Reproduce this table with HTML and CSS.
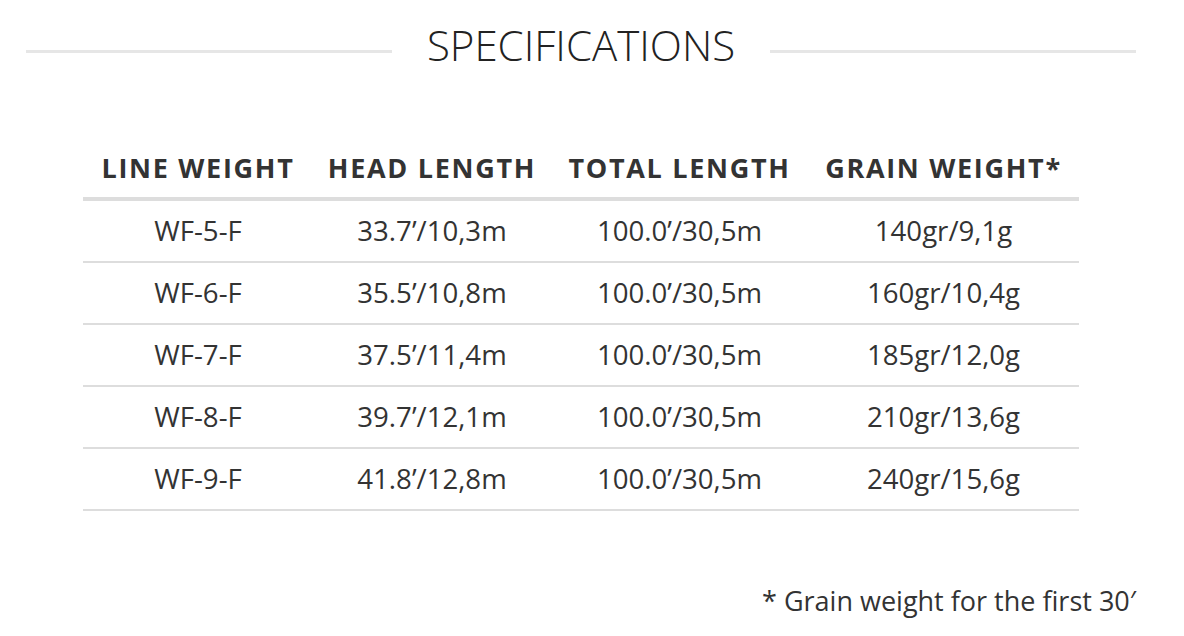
FILE: index.html
```html
<!DOCTYPE html>
<html lang="en">
<head>
<meta charset="utf-8">
<title>Specifications</title>
<link rel="stylesheet" href="styles.css">
</head>
<body>
<section class="specs">
  <div class="specs-head">
    <span class="rule"></span>
    <h2 class="specs-title">SPECIFICATIONS</h2>
    <span class="rule"></span>
  </div>
  <table class="spec-table">
    <colgroup>
      <col class="c1"><col class="c2"><col class="c3"><col class="c4">
    </colgroup>
    <thead>
      <tr><th>LINE WEIGHT</th><th>HEAD LENGTH</th><th>TOTAL LENGTH</th><th>GRAIN WEIGHT*</th></tr>
    </thead>
    <tbody>
      <tr><td>WF-5-F</td><td>33.7’/10,3m</td><td>100.0’/30,5m</td><td>140gr/9,1g</td></tr>
      <tr><td>WF-6-F</td><td>35.5’/10,8m</td><td>100.0’/30,5m</td><td>160gr/10,4g</td></tr>
      <tr><td>WF-7-F</td><td>37.5’/11,4m</td><td>100.0’/30,5m</td><td>185gr/12,0g</td></tr>
      <tr><td>WF-8-F</td><td>39.7’/12,1m</td><td>100.0’/30,5m</td><td>210gr/13,6g</td></tr>
      <tr><td>WF-9-F</td><td>41.8’/12,8m</td><td>100.0’/30,5m</td><td>240gr/15,6g</td></tr>
    </tbody>
  </table>
  <p class="footnote">* Grain weight for the first 30′</p>
</section>
</body>
</html>
```

FILE: styles.css
```css
html, body {
  margin: 0;
  padding: 0;
  background: #ffffff;
}

body {
  font-family: "Open Sans", "Liberation Sans", sans-serif;
  color: #333333;
}

.specs {
  padding: 21px 48px 0 26px;
}

.specs-head {
  display: flex;
  align-items: center;
  gap: 35px;
}

.rule {
  flex: 1;
  height: 3px;
  margin-top: 12px;
  background: #e6e6e6;
}

.specs-title {
  margin: 0;
  font-size: 42px;
  line-height: 48px;
  font-weight: 300;
  color: #222222;
  letter-spacing: 0;
}

.spec-table {
  margin: 80px 0 0 57px;
  width: 996px;
  border-collapse: collapse;
  table-layout: fixed;
}

.c1 { width: 230px; }
.c2 { width: 238px; }
.c3 { width: 257px; }
.c4 { width: 271px; }

.spec-table th {
  font-size: 27px;
  line-height: 38px;
  font-weight: 700;
  letter-spacing: 1.7px;
  color: #333333;
  padding: 0 0 10px;
  text-align: center;
  white-space: nowrap;
  border-bottom: 4px solid #dddddd;
}

.spec-table td {
  font-size: 27.6px;
  line-height: 38px;
  font-weight: 400;
  color: #333333;
  text-align: center;
  padding: 10px 0 12px;
  border-bottom: 2px solid #dddddd;
}

.footnote {
  margin: 72px 0 0;
  text-align: right;
  font-size: 27px;
  line-height: 36px;
  color: #333333;
}
```
